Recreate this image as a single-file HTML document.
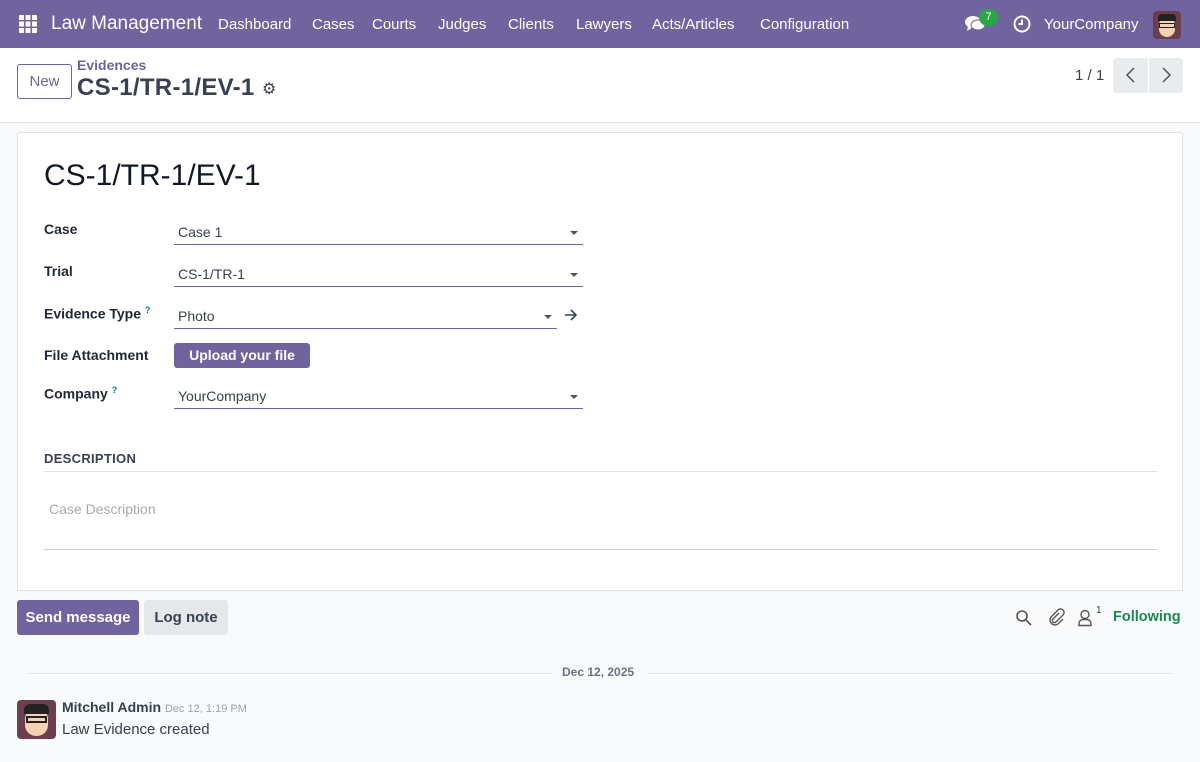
<!DOCTYPE html>
<html><head><meta charset="utf-8"><style>
*{box-sizing:border-box;margin:0;padding:0}
body{width:1200px;height:762px;overflow:hidden;font-family:"Liberation Sans",sans-serif;background:#f9fafb;color:#374151;position:relative;font-size:14px}
.a{position:absolute;white-space:nowrap}
.nav{position:absolute;left:0;top:0;width:1200px;height:48px;background:#71639e;color:#fff}
.nav .m{font-size:15px;top:16px}
.cp{position:absolute;left:0;top:48px;width:1200px;height:75px;background:#fff;border-bottom:1px solid #dee2e6}
.sheet{position:absolute;left:17px;top:132px;width:1166px;height:459px;background:#fff;border:1px solid #dee2e6;border-radius:2px}
.lbl{font-weight:bold;font-size:14px;color:#1f2937}
.fld{position:absolute;border-bottom:1px solid #71639e;height:26px;font-size:14px;color:#374151;padding:5px 4px 0}
.car{position:absolute;width:0;height:0;border-left:4px solid transparent;border-right:4px solid transparent;border-top:4px solid #555}
</style></head><body>
<div class="nav">
<svg class="a" style="left:19px;top:15px" width="18" height="18" viewBox="0 0 18 18" fill="#fff"><rect x="0" y="0" width="5" height="5"/><rect x="6.5" y="0" width="5" height="5"/><rect x="13" y="0" width="5" height="5"/><rect x="0" y="6.5" width="5" height="5"/><rect x="6.5" y="6.5" width="5" height="5"/><rect x="13" y="6.5" width="5" height="5"/><rect x="0" y="13" width="5" height="5"/><rect x="6.5" y="13" width="5" height="5"/><rect x="13" y="13" width="5" height="5"/></svg>
<div class="a" style="left:51px;top:13px;font-size:19px">Law Management</div>
<div class="a m" style="left:218px">Dashboard</div>
<div class="a m" style="left:312px">Cases</div>
<div class="a m" style="left:372px">Courts</div>
<div class="a m" style="left:438px">Judges</div>
<div class="a m" style="left:508px">Clients</div>
<div class="a m" style="left:576px">Lawyers</div>
<div class="a m" style="left:652px">Acts/Articles</div>
<div class="a m" style="left:760px">Configuration</div>
<svg class="a" style="left:965px;top:15px" width="22" height="18" viewBox="0 0 22 18" fill="#fff"><ellipse cx="8" cy="7" rx="8" ry="6"/><path d="M3 11 L2 16 L8 12Z"/><ellipse cx="13" cy="10" rx="7" ry="5" fill="#fff" stroke="#71639e" stroke-width="1"/></svg>
<div class="a" style="left:979px;top:9px;width:19px;height:17px;border-radius:9px;background:#28a745;font-size:11px;text-align:center;line-height:17px">7</div>
<svg class="a" style="left:1013px;top:15px" width="18" height="18" viewBox="0 0 18 18" fill="none" stroke="#fff" stroke-width="2"><circle cx="9" cy="9" r="7.5"/><path d="M9 4.5V9H5.5"/></svg>
<div class="a m" style="left:1044px">YourCompany</div>
<div class="a" style="left:1153px;top:11px;width:28px;height:28px;border-radius:4px;background:#6b3f4e;overflow:hidden"><div style="position:absolute;left:6px;top:6px;width:16px;height:20px;background:#f5d3b0;border-radius:8px"></div><div style="position:absolute;left:5px;top:3px;width:18px;height:7px;background:#222;border-radius:4px 4px 0 0"></div><div style="position:absolute;left:6px;top:12px;width:16px;height:5px;border:1.5px solid #222"></div></div>
</div>
<div class="cp">
<div class="a" style="left:17px;top:16px;width:55px;height:35px;border:1px solid #71639e;border-radius:3px;color:#71639e;font-size:15px;text-align:center;line-height:33px">New</div>
<div class="a" style="left:77px;top:9px;color:#71639e;font-size:14px;font-weight:bold">Evidences</div>
<div class="a" style="left:77px;top:26px;font-size:24px;font-weight:bold;color:#374151;letter-spacing:.3px">CS-1/TR-1/EV-1</div>
<div class="a" style="left:262px;top:31px;font-size:16px;color:#374151">⚙</div>
<div class="a" style="left:1075px;top:19px;font-size:15px">1 / 1</div>
<div class="a" style="left:1113px;top:10px;width:70px;height:35px;background:#e9ecef;border-radius:3px"></div>
<div class="a" style="left:1148px;top:10px;width:1px;height:35px;background:#fff"></div>
<svg class="a" style="left:1124px;top:18px" width="14" height="18" viewBox="0 0 14 18" fill="none" stroke="#555" stroke-width="1.5"><path d="M10 2L3 9l7 7"/></svg>
<svg class="a" style="left:1159px;top:18px" width="14" height="18" viewBox="0 0 14 18" fill="none" stroke="#555" stroke-width="1.5"><path d="M4 2l7 7-7 7"/></svg>
</div>
<div class="sheet">
<div class="a" style="left:26px;top:26px;font-size:30px;color:#111827">CS-1/TR-1/EV-1</div>
<div class="a lbl" style="left:26px;top:88px">Case</div>
<div class="fld" style="left:156px;top:86px;width:409px">Case 1</div><div class="car" style="left:552px;top:98px"></div>
<div class="a lbl" style="left:26px;top:130px">Trial</div>
<div class="fld" style="left:156px;top:128px;width:409px">CS-1/TR-1</div><div class="car" style="left:552px;top:140px"></div>
<div class="a lbl" style="left:26px;top:172px">Evidence Type <sup style="color:#017e84;font-size:9px">?</sup></div>
<div class="fld" style="left:156px;top:170px;width:383px">Photo</div><div class="car" style="left:526px;top:182px"></div>
<svg class="a" style="left:546px;top:176px" width="14" height="12" viewBox="0 0 14 12" fill="none" stroke="#374151" stroke-width="1.6"><path d="M1 6h11M7 1l5 5-5 5"/></svg>
<div class="a lbl" style="left:26px;top:214px">File Attachment</div>
<div class="a" style="left:156px;top:210px;width:136px;height:25px;background:#71639e;color:#fff;border-radius:3px;font-weight:bold;font-size:14px;text-align:center;line-height:25px">Upload your file</div>
<div class="a lbl" style="left:26px;top:252px">Company <sup style="color:#017e84;font-size:9px">?</sup></div>
<div class="fld" style="left:156px;top:250px;width:409px">YourCompany</div><div class="car" style="left:552px;top:262px"></div>
<div class="a" style="left:26px;top:318px;font-weight:bold;font-size:13px;color:#374151;letter-spacing:.3px">DESCRIPTION</div>
<div class="a" style="left:26px;top:338px;width:1113px;height:1px;background:#dee2e6"></div>
<div class="a" style="left:31px;top:368px;color:#aaa;font-size:14px">Case Description</div>
<div class="a" style="left:26px;top:416px;width:1113px;height:1px;background:#ccc"></div>
</div>
<div class="a" style="left:17px;top:600px;width:122px;height:35px;background:#71639e;color:#fff;border-radius:3px;font-weight:bold;font-size:15px;text-align:center;line-height:35px">Send message</div>
<div class="a" style="left:144px;top:600px;width:84px;height:35px;background:#e5e7eb;color:#374151;border-radius:3px;font-weight:bold;font-size:15px;text-align:center;line-height:35px">Log note</div>
<svg class="a" style="left:1015px;top:609px" width="18" height="18" viewBox="0 0 18 18" fill="none" stroke="#555" stroke-width="1.6"><circle cx="7" cy="7" r="5"/><path d="M11 11l5 5"/></svg>
<svg class="a" style="left:1047px;top:608px" width="18" height="18" viewBox="0 0 18 18" fill="none" stroke="#555" stroke-width="1.4"><path d="M12 5L6 11a2 2 0 003 3l7-7a3.5 3.5 0 00-5-5L4 9a5 5 0 007 7l5-5"/></svg>
<svg class="a" style="left:1077px;top:609px" width="16" height="18" viewBox="0 0 16 18" fill="none" stroke="#555" stroke-width="1.4"><circle cx="8" cy="5.5" r="4"/><path d="M2 16.5v-2a4 4 0 014-4h4a4 4 0 014 4v2z"/></svg>
<div class="a" style="left:1096px;top:605px;font-size:10px">1</div>
<div class="a" style="left:1113px;top:609px;color:#198754;font-weight:bold;font-size:14.5px">Following</div>
<div class="a" style="left:26px;top:673px;width:526px;height:1px;background:#e5e7eb"></div>
<div class="a" style="left:562px;top:665px;font-size:12px;color:#6b7280;font-weight:bold">Dec 12, 2025</div>
<div class="a" style="left:648px;top:673px;width:526px;height:1px;background:#e5e7eb"></div>
<div class="a" style="left:17px;top:700px;width:39px;height:39px;border-radius:4px;background:#6b3f4e;overflow:hidden"><div style="position:absolute;left:8px;top:8px;width:23px;height:28px;background:#f5d3b0;border-radius:11px"></div><div style="position:absolute;left:7px;top:4px;width:25px;height:10px;background:#222;border-radius:6px 6px 0 0"></div><div style="position:absolute;left:9px;top:16px;width:21px;height:7px;border:2px solid #222"></div></div>
<div class="a" style="left:62px;top:699px;font-weight:bold;font-size:14px;color:#374151">Mitchell Admin <span style="font-weight:normal;font-size:11px;color:#9ca3af">Dec 12, 1:19 PM</span></div>
<div class="a" style="left:62px;top:721px;font-size:15px;color:#374151">Law Evidence created</div>
</body></html>
